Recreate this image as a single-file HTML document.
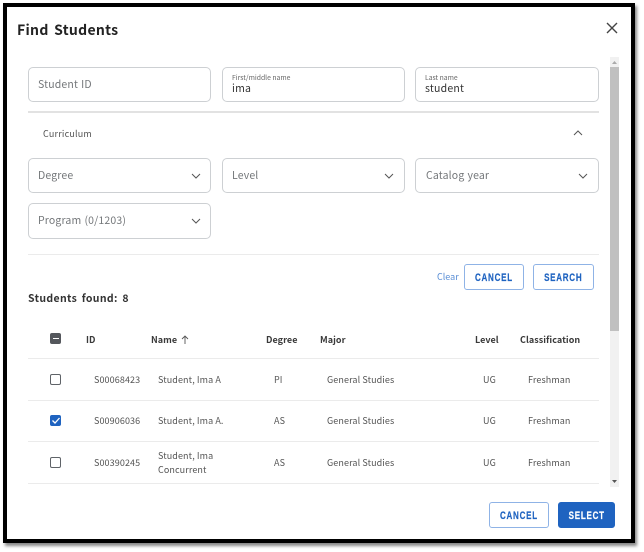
<!DOCTYPE html>
<html><head><meta charset="utf-8">
<style>
*{box-sizing:border-box}
html,body{margin:0;padding:0;width:644px;height:552px;overflow:hidden;background:#fff}
body{font-family:"Noto Sans CJK JP","Liberation Sans",sans-serif;position:relative}
.a{position:absolute;white-space:nowrap}
#frame{position:absolute;left:3px;top:3px;width:632px;height:540px;border:4px solid #000;box-shadow:2px 3px 3px #888;background:#fff}
.f{position:absolute;border:1px solid #cdd0d3;border-radius:5px;background:#fff}
.ph{font-size:10.5px;color:#74777a;line-height:14px;word-spacing:.6px;letter-spacing:.15px}
.lb{font-size:6.8px;color:#666;line-height:9px}
.v{font-size:10.5px;color:#333;line-height:14px;letter-spacing:.2px}
.hr{position:absolute;background:#ebebeb;height:1px;left:28px;width:571px}
.btn{position:absolute;border:1px solid #8fb3e6;border-radius:3px;background:#fff;color:#1f63c0;font:bold 11px/26px "Liberation Sans",sans-serif;letter-spacing:1px;text-align:center}
.btn span{display:inline-block;transform:scaleX(.73);-webkit-text-stroke:.2px currentColor}
.th{font-size:9px;font-weight:700;color:#3a3a3a;line-height:12px;letter-spacing:.05px}
.td{font-size:9px;color:#555;line-height:13px;letter-spacing:.1px}
.cb{position:absolute;left:50px;width:11px;height:11px;border:1.3px solid #5f6368;border-radius:2px;background:#fff}
svg{position:absolute;overflow:visible}
</style></head><body>
<div id="frame"></div>
<div class="a" style="left:17px;top:20px;font-size:14px;font-weight:700;color:#222;line-height:20px;word-spacing:2px;letter-spacing:.3px">Find Students</div>
<svg style="left:606px;top:22px" width="12" height="12" fill="none" stroke="#444" stroke-width="1.4"><path d="M1 1L11 11M11 1L1 11"/></svg>

<div class="a" style="left:610px;top:57px;width:9px;height:430px;background:#f1f1f1"></div>
<div class="a" style="left:610px;top:67px;width:9px;height:264px;background:#c0c0c0"></div>
<svg style="left:612px;top:61px" width="5" height="3"><path d="M2.5 0L5 3H0z" fill="#aaa"/></svg>
<svg style="left:612px;top:480px" width="5" height="3"><path d="M0 0H5L2.500 3z" fill="#555"/></svg>

<div class="f" style="left:28px;top:67px;width:183px;height:35px"></div>
<div class="a ph" style="left:38px;top:78px">Student ID</div>
<div class="f" style="left:222px;top:67px;width:183px;height:35px"></div>
<div class="a lb" style="left:232px;top:73px">First/middle name</div>
<div class="a v" style="left:232px;top:82px">ima</div>
<div class="f" style="left:415px;top:67px;width:184px;height:35px"></div>
<div class="a lb" style="left:425px;top:73px">Last name</div>
<div class="a v" style="left:425px;top:82px">student</div>
<div class="hr" style="top:111px;height:1.500px;background:#e2e2e2"></div>

<div class="a" style="left:43px;top:127px;font-size:9px;color:#555;line-height:13px;letter-spacing:.2px">Curriculum</div>
<svg style="left:573px;top:130px" width="10" height="6" fill="none" stroke="#555" stroke-width="1"><path d="M1 5L5 1L9 5"/></svg>

<div class="f" style="left:28px;top:158px;width:183px;height:35px"></div>
<div class="a ph" style="left:38px;top:169px">Degree</div>
<svg style="left:191px;top:173px" width="10" height="6" fill="none" stroke="#555" stroke-width="1"><path d="M1 1L5 5L9 1"/></svg>
<div class="f" style="left:222px;top:158px;width:183px;height:35px"></div>
<div class="a ph" style="left:232px;top:169px">Level</div>
<svg style="left:384px;top:173px" width="10" height="6" fill="none" stroke="#555" stroke-width="1"><path d="M1 1L5 5L9 1"/></svg>
<div class="f" style="left:415px;top:158px;width:184px;height:35px"></div>
<div class="a ph" style="left:426px;top:169px">Catalog year</div>
<svg style="left:578px;top:173px" width="10" height="6" fill="none" stroke="#555" stroke-width="1"><path d="M1 1L5 5L9 1"/></svg>
<div class="f" style="left:28px;top:203px;width:183px;height:36px"></div>
<div class="a ph" style="left:38px;top:214px">Program (0/1203)</div>
<svg style="left:191px;top:218px" width="10" height="6" fill="none" stroke="#555" stroke-width="1"><path d="M1 1L5 5L9 1"/></svg>
<div class="hr" style="top:254px"></div>

<div class="a" style="left:437px;top:270px;font-size:9px;color:#5b8fd6;line-height:13px">Clear</div>
<div class="btn" style="left:464px;top:264px;width:60px;height:26px"><span>CANCEL</span></div>
<div class="btn" style="left:533px;top:264px;width:61px;height:26px"><span>SEARCH</span></div>

<div class="a" style="left:28px;top:292px;font-size:10.500px;font-weight:700;color:#333;line-height:14px;word-spacing:1.800px;letter-spacing:.35px">Students found: 8</div>

<div class="a" style="left:50px;top:333px;width:11px;height:11px;border-radius:2px;background:#54575c"></div>
<div class="a" style="left:52.500px;top:337.500px;width:6px;height:1.500px;background:#fff"></div>
<div class="a th" style="left:86px;top:334px">ID</div>
<div class="a th" style="left:151px;top:334px">Name</div>
<svg style="left:181px;top:335px" width="8" height="9" fill="none" stroke="#555" stroke-width=".9"><path d="M4 9V1M1 4L4 1L7 4"/></svg>
<div class="a th" style="left:266px;top:334px">Degree</div>
<div class="a th" style="left:320px;top:334px">Major</div>
<div class="a th" style="left:475px;top:334px">Level</div>
<div class="a th" style="left:520px;top:334px">Classification</div>
<div class="hr" style="top:358px"></div>

<div class="cb" style="top:374px"></div>
<div class="a td" style="left:94px;top:373px">S00068423</div>
<div class="a td" style="left:158px;top:373px">Student, Ima A</div>
<div class="a td" style="left:274px;top:373px">PI</div>
<div class="a td" style="left:327px;top:373px">General Studies</div>
<div class="a td" style="left:483px;top:373px">UG</div>
<div class="a td" style="left:528px;top:373px">Freshman</div>
<div class="hr" style="top:400px"></div>

<div class="a" style="left:50px;top:415px;width:11px;height:11px;border-radius:2px;background:#1f63c0"></div>
<svg style="left:52px;top:417px" width="8" height="7" fill="none" stroke="#fff" stroke-width="1.300"><path d="M.5 3.500L3 6L7.500 1"/></svg>
<div class="a td" style="left:94px;top:414px">S00906036</div>
<div class="a td" style="left:158px;top:414px">Student, Ima A.</div>
<div class="a td" style="left:274px;top:414px">AS</div>
<div class="a td" style="left:327px;top:414px">General Studies</div>
<div class="a td" style="left:483px;top:414px">UG</div>
<div class="a td" style="left:528px;top:414px">Freshman</div>
<div class="hr" style="top:441px"></div>

<div class="cb" style="top:457px"></div>
<div class="a td" style="left:94px;top:456px">S00390245</div>
<div class="a td" style="left:158px;top:449px">Student, Ima</div>
<div class="a td" style="left:158px;top:463px">Concurrent</div>
<div class="a td" style="left:274px;top:456px">AS</div>
<div class="a td" style="left:327px;top:456px">General Studies</div>
<div class="a td" style="left:483px;top:456px">UG</div>
<div class="a td" style="left:528px;top:456px">Freshman</div>
<div class="hr" style="top:483px"></div>

<div class="btn" style="left:489px;top:502px;width:60px;height:26px"><span>CANCEL</span></div>
<div class="btn" style="left:558px;top:502px;width:57px;height:26px;background:#1f63c0;border-color:#1f63c0;color:#fff"><span>SELECT</span></div>
</body></html>
